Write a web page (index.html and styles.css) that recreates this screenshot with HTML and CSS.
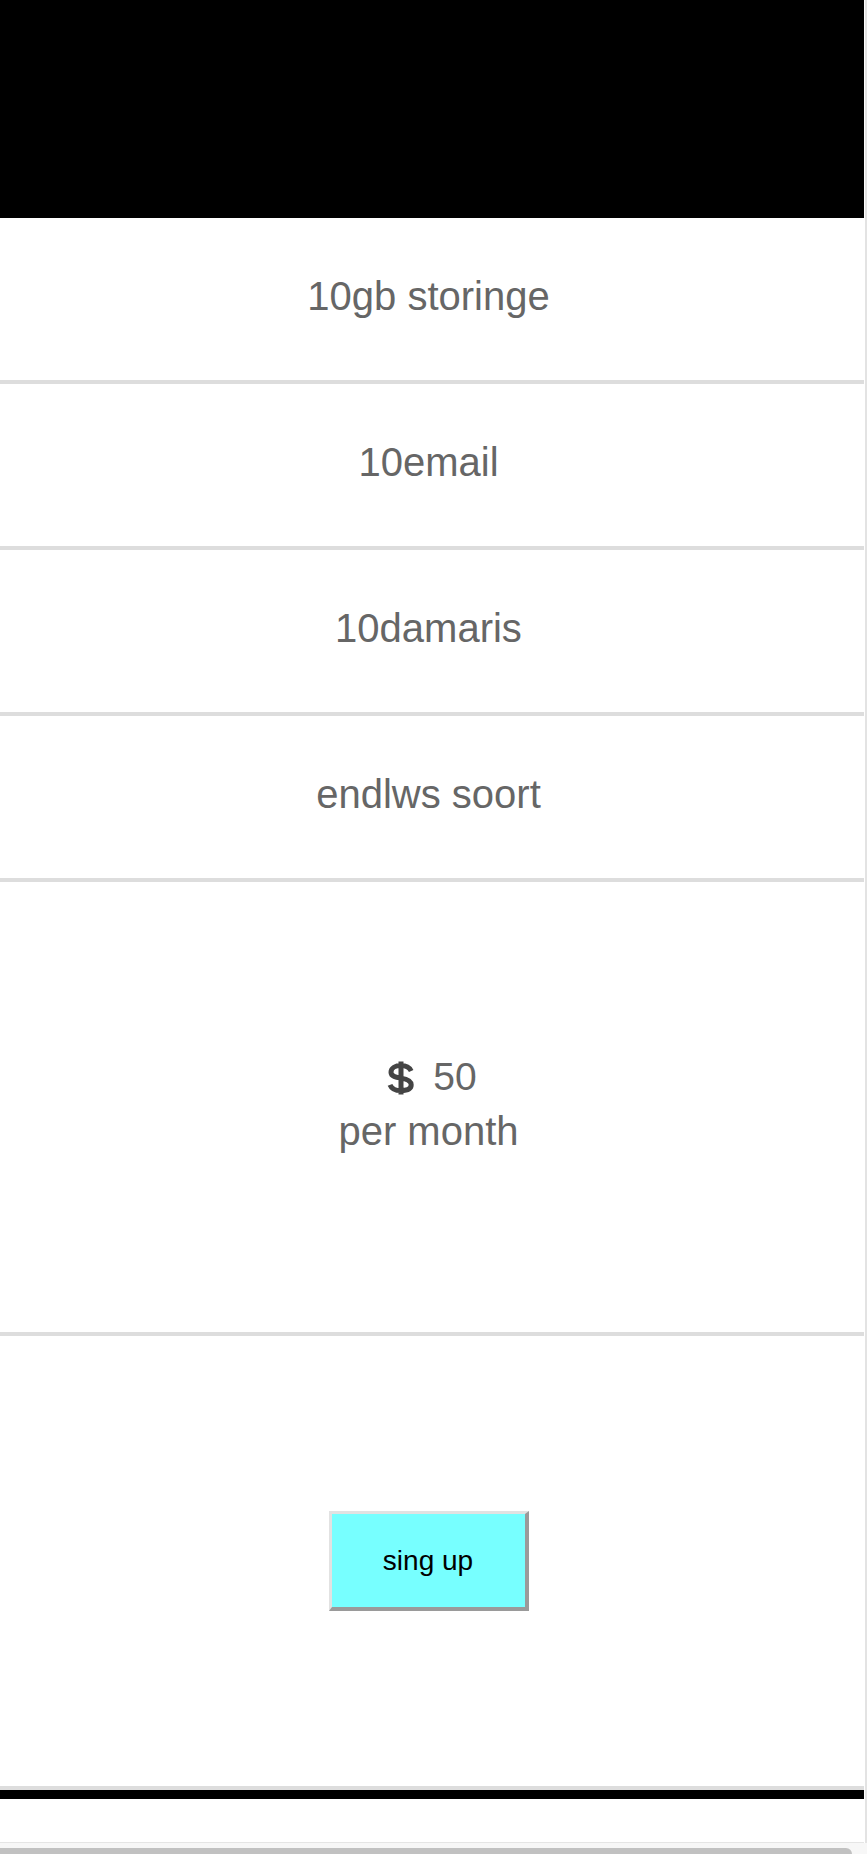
FILE: index.html
```html
<!DOCTYPE html>
<html>
<head>
<meta charset="utf-8">
<title>Plan</title>
<link rel="stylesheet" href="styles.css">
</head>
<body>
<div class="page">
  <header class="top"></header>
  <ul class="plan">
    <li class="feature">10gb storinge</li>
    <li class="feature">10email</li>
    <li class="feature">10damaris</li>
    <li class="feature">endlws soort</li>
    <li class="price">
      <div class="amount"><svg class="dollar" width="30" height="34" viewBox="0 0 30 34"><path d="M25.2 10C23.2 6 19.2 4.6 15 4.6C9.5 4.6 5 7 5 11.2C5 15.5 10 16.3 15 17.1C20.5 18 25.2 19.5 25.2 23.8C25.2 28 20.5 29.6 15 29.6C10 29.6 5.5 27.6 4 23.8M15 0.5V33.5" fill="none" stroke="#444" stroke-width="5"/></svg><span class="num">50</span></div>
      <div class="period">per month</div>
    </li>
    <li class="action"><button class="signup">sing up</button></li>
  </ul>
  <div class="bar"></div>
  <footer class="foot"></footer>
</div>
<div class="hscroll"><div class="thumb"></div></div>
</body>
</html>
```

FILE: styles.css
```css
html, body {
  margin: 0;
  padding: 0;
  background: #ffffff;
}
body {
  font-family: "Liberation Sans", Arial, sans-serif;
}
.page {
  width: 864px;
  padding-right: 1px;
  border-right: 2px solid #e3e3e3;
  background: #ffffff;
}
.top {
  height: 218px;
  background: #000000;
}
.plan {
  list-style: none;
  margin: 0;
  padding: 0;
}
.plan li {
  border-bottom: 4px solid #dddddd;
  color: #666666;
  font-size: 40px;
  text-align: center;
  padding-right: 7px;
}
.feature {
  height: 156px;
  padding-bottom: 6px;
  display: flex;
  align-items: center;
  justify-content: center;
}
.price {
  height: 436px;
  padding-bottom: 14px;
  display: flex;
  flex-direction: column;
  align-items: center;
  justify-content: center;
}
.amount {
  display: flex;
  align-items: center;
  justify-content: center;
  height: 62px;
  gap: 17px;
  font-size: 39px;
  margin-left: 6px;
}
.dollar {
  display: block;
  margin-top: 2px;
}
.period {
  line-height: 46px;
}
.action {
  height: 450px;
  display: flex;
  align-items: center;
  justify-content: center;
}
.signup {
  width: 200px;
  height: 100px;
  background: #77ffff;
  border-style: solid;
  border-width: 3px 4px 4px 3px;
  border-color: #e2e2e2 #9a9a9a #9a9a9a #e2e2e2;
  font-family: "Liberation Sans", Arial, sans-serif;
  font-size: 28px;
  color: #000000;
  padding: 0;
}
.bar {
  height: 9px;
  background: #000000;
}
.foot {
  height: 43px;
  border-bottom: 1px solid #e5e5e5;
}
.hscroll {
  height: 11px;
  background: #f7f7f7;
  padding-top: 5px;
  box-sizing: border-box;
}
.thumb {
  width: 852px;
  height: 6px;
  background: #c1c1c1;
  border-radius: 0 6px 0 0;
}
```
